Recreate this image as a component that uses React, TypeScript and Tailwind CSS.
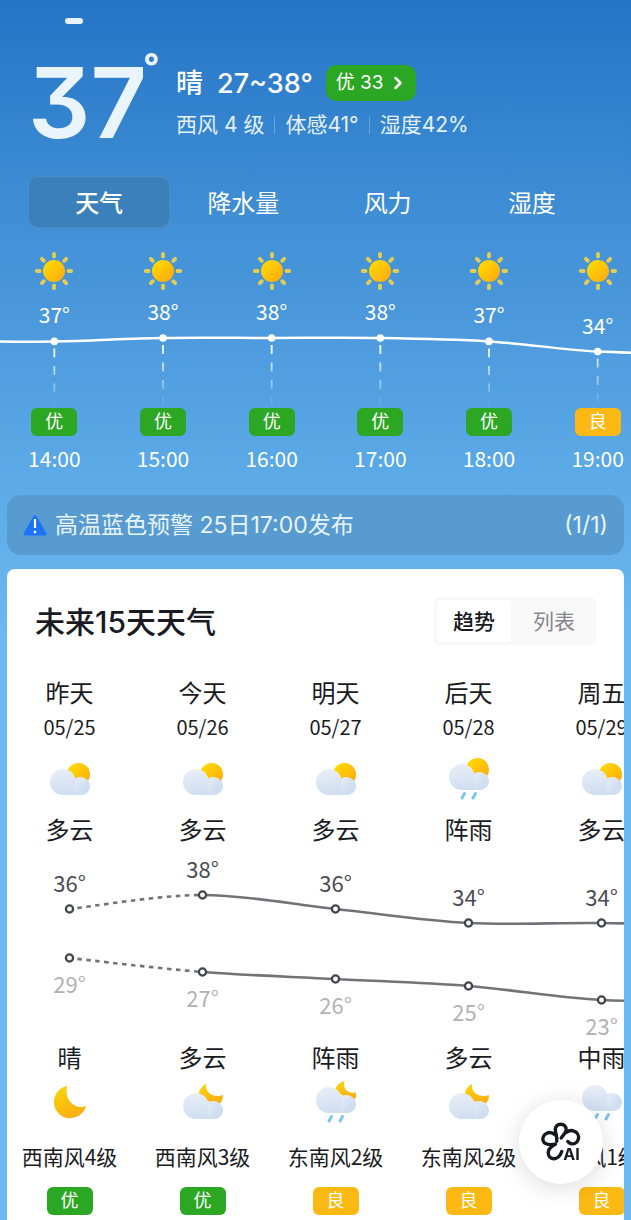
import { useState } from "react";
import { ChevronRight } from "lucide-react";
import clsx from "clsx";

type Air = "优" | "良";
type IconName = "sun" | "moon" | "cloudSun" | "cloudMoon" | "showerSun" | "showerMoon" | "rain";
type Point = { x: number; y: number };

const TABS = ["天气", "降水量", "风力", "湿度"];

const HOURS: { time: string; temp: number; air: Air }[] = [
  { time: "14:00", temp: 37, air: "优" },
  { time: "15:00", temp: 38, air: "优" },
  { time: "16:00", temp: 38, air: "优" },
  { time: "17:00", temp: 38, air: "优" },
  { time: "18:00", temp: 37, air: "优" },
  { time: "19:00", temp: 34, air: "良" },
];

const DAYS: {
  name: string;
  date: string;
  dayIcon: IconName;
  day: string;
  high: number;
  low: number;
  night: string;
  nightIcon: IconName;
  wind: string;
  air: Air;
}[] = [
  { name: "昨天", date: "05/25", dayIcon: "cloudSun", day: "多云", high: 36, low: 29, night: "晴", nightIcon: "moon", wind: "西南风4级", air: "优" },
  { name: "今天", date: "05/26", dayIcon: "cloudSun", day: "多云", high: 38, low: 27, night: "多云", nightIcon: "cloudMoon", wind: "西南风3级", air: "优" },
  { name: "明天", date: "05/27", dayIcon: "cloudSun", day: "多云", high: 36, low: 26, night: "阵雨", nightIcon: "showerMoon", wind: "东南风2级", air: "良" },
  { name: "后天", date: "05/28", dayIcon: "showerSun", day: "阵雨", high: 34, low: 25, night: "多云", nightIcon: "cloudMoon", wind: "东南风2级", air: "良" },
  { name: "周五", date: "05/29", dayIcon: "cloudSun", day: "多云", high: 34, low: 23, night: "中雨", nightIcon: "rain", wind: "南风1级", air: "良" },
];

// Catmull-Rom through every point, from index `from` to index `to`
function smooth(pts: Point[], from = 0, to = pts.length - 1) {
  let d = `M${pts[from].x} ${pts[from].y}`;
  for (let i = from; i < to; i++) {
    const p0 = pts[i - 1] ?? pts[i];
    const p1 = pts[i];
    const p2 = pts[i + 1];
    const p3 = pts[i + 2] ?? p2;
    d += ` C${p1.x + (p2.x - p0.x) / 6} ${p1.y + (p2.y - p0.y) / 6} ${p2.x - (p3.x - p1.x) / 6} ${p2.y - (p3.y - p1.y) / 6} ${p2.x} ${p2.y}`;
  }
  return d;
}

function IconDefs() {
  return (
    <svg className="absolute size-0" aria-hidden="true">
      <defs>
        <linearGradient id="sunFill" x1="0" y1="0" x2="1" y2="1">
          <stop offset="0" stopColor="#ffe100" />
          <stop offset="1" stopColor="#ffa410" />
        </linearGradient>
        <linearGradient id="moonFill" x1="0" y1="0" x2="0.4" y2="1">
          <stop offset="0" stopColor="#f7d80c" />
          <stop offset="1" stopColor="#fbb014" />
        </linearGradient>
        <linearGradient id="cloudFill" x1="0.2" y1="0" x2="0.4" y2="1">
          <stop offset="0" stopColor="#e9eef7" />
          <stop offset="1" stopColor="#cfdef1" />
        </linearGradient>
        <linearGradient id="puffFill" x1="0" y1="0" x2="1" y2="1">
          <stop offset="0" stopColor="#e9eff8" />
          <stop offset="0.6" stopColor="#cfdef1" />
        </linearGradient>
        <linearGradient id="dashFade" gradientUnits="userSpaceOnUse" x1="0" y1="45" x2="0" y2="108">
          <stop offset="0" stopColor="#fff" />
          <stop offset="1" stopColor="#fff" stopOpacity="0" />
        </linearGradient>
      </defs>
    </svg>
  );
}

function Cloud() {
  return (
    <>
      <path d="M13 6a13 13 0 0 1 12.4 9.3A9 9 0 1 1 30.5 32H13A13 13 0 0 1 13 6Z" fill="url(#cloudFill)" />
      <path d="M24.500 23c.500-5 3-8.500 6.500-8.500a9 8.700 0 0 1 0 17.500h-6Z" fill="url(#puffFill)" />
    </>
  );
}

function Drops() {
  return (
    <path d="M15.500 35.500 13 40M26.500 35.500 24 40" stroke="#7cc6ec" strokeWidth="3" strokeLinecap="round" fill="none" />
  );
}

function WeatherIcon({ name }: { name: IconName }) {
  if (name === "sun") {
    return (
      <svg viewBox="0 0 40 40" className="size-10" aria-hidden="true">
        {[0, 45, 90, 135, 180, 225, 270, 315].map((a) => (
          <path key={a} d="M20 2.800v2.800" transform={`rotate(${a} 20 20)`} stroke="#e3cd55" strokeWidth="3.800" strokeLinecap="round" />
        ))}
        <circle cx="20" cy="20" r="11" fill="url(#sunFill)" />
      </svg>
    );
  }
  return (
    <svg viewBox="0 0 40 44" className="h-11 w-10" aria-hidden="true">
      {name === "moon" && (
        <path d="M17 6A16.300 16.300 0 1 0 36 26C27 30 14 22 17 6Z" fill="url(#moonFill)" />
      )}
      {name === "cloudSun" && (
        <g transform="translate(0 6)">
          <circle cx="28.500" cy="11.500" r="11.500" fill="url(#sunFill)" />
          <Cloud />
        </g>
      )}
      {name === "showerSun" && (
        <g transform="translate(0 1)">
          <circle cx="28.500" cy="11.500" r="11.500" fill="url(#sunFill)" />
          <Cloud />
          <Drops />
        </g>
      )}
      {name === "cloudMoon" && (
        <g transform="translate(0 7)">
          <path d="M23-3c-4 2-7 6-7.500 11L30 17l7.500-1c1.500-2 2.500-5 2.500-8-8 3-18-1-17-11Z" fill="url(#moonFill)" />
          <Cloud />
        </g>
      )}
      {name === "showerMoon" && (
        <g transform="translate(0 1)">
          <path d="M28.500 0C24 1 20 5 19 9l11 8 9 1c1.500-2 2.500-4 2-7-7 3-15-2-12.500-11Z" fill="url(#moonFill)" />
          <Cloud />
          <Drops />
        </g>
      )}
      {name === "rain" && (
        <g transform="translate(0 -1)">
          <Cloud />
          <Drops />
        </g>
      )}
    </svg>
  );
}

function AirBadge({ air }: { air: Air }) {
  return (
    <span
      className={clsx(
        "flex h-7 w-[46px] items-center justify-center rounded-md pb-1 text-lg leading-none text-white",
        air === "优" ? "bg-[#2ca724]" : "bg-[#fdb913]",
      )}
    >
      {air}
    </span>
  );
}

function HourlyChart() {
  const step = 652 / HOURS.length;
  const y = (t: number) => 38 + (38 - t) * 3.4;
  const pts = HOURS.map((h, i) => ({ x: step * (i + 0.5), y: y(h.temp) }));
  // the line runs on past both ends of the visible hours
  const line = [{ x: -step / 2, y: y(37) }, ...pts, { x: step * 6.5, y: y(33.5) }];

  return (
    <svg viewBox="0 0 652 108" className="h-[108px] w-[652px]" role="img" aria-label="逐小时气温">
      <path d={smooth(line)} fill="none" stroke="#fff" strokeWidth="2.500" />
      {pts.map((p, i) => (
        <g key={HOURS[i].time}>
          <path d={`M${p.x} ${p.y + 7}L${p.x + 0.01} 108`} stroke="url(#dashFade)" strokeWidth="1.800" strokeDasharray="9 8.500" />
          <circle cx={p.x} cy={p.y} r="3.800" fill="#fff" />
          <text x={p.x} y={p.y - 18} textAnchor="middle" className="fill-white text-[21px]">
            {HOURS[i].temp}°
          </text>
        </g>
      ))}
    </svg>
  );
}

function DailyChart() {
  const y = (t: number) => 50 + (38 - t) * 7;
  const x = (i: number) => 133 * (i + 0.5);
  const highs = [...DAYS.map((d) => d.high), 33.5].map((t, i) => ({ x: x(i), y: y(t) }));
  const lows = [...DAYS.map((d) => d.low), 23].map((t, i) => ({ x: x(i), y: y(t) }));

  return (
    <svg viewBox="0 0 665 196" className="h-[196px] w-[665px]" role="img" aria-label="每日最高和最低气温">
      {[highs, lows].map((pts, row) => (
        <g key={row} fill="none" stroke="#727278" strokeWidth="2.600">
          <path d={smooth(pts, 0, 1)} strokeDasharray="4.500 4.500" strokeDashoffset="-8" />
          <path d={smooth(pts, 1)} />
        </g>
      ))}
      {DAYS.map((d, i) => (
        <g key={d.date}>
          <circle cx={x(i)} cy={y(d.high)} r="3.600" fill="#fff" stroke="#44454c" strokeWidth="2.300" />
          <circle cx={x(i)} cy={y(d.low)} r="3.600" fill="#fff" stroke="#44454c" strokeWidth="2.300" />
          <text x={x(i)} y={y(d.high) - 17} textAnchor="middle" className="fill-[#4b4c52] text-[22px]">
            {d.high}°
          </text>
          <text x={x(i)} y={y(d.low) + 35} textAnchor="middle" className="fill-[#b2b2b5] text-[22px]">
            {d.low}°
          </text>
        </g>
      ))}
    </svg>
  );
}

function AssistantLogo() {
  return (
    <svg viewBox="0 0 42 42" className="size-[42px]" fill="none" stroke="#16171f" strokeWidth="3.400" strokeLinecap="round" aria-hidden="true">
      <path d="M16.700 20.300C17.500 15 15.300 12.500 15.300 8.800C15.300 5.500 17.500 3.200 20.700 3.200S26.200 5.500 26.200 8.800C26.200 12 23 14 21.200 17" />
      <path d="M26.300 11.500C28.500 9.800 31.500 9 34 10.200C37.500 11.500 39.300 15 38.300 18.300C37.200 21.800 34 23.500 31 22.600C29.500 22.200 28.500 21.500 27.800 20.500" />
      <path d="M15.300 13.800C12.500 11.600 9.500 10.900 6.800 12.200C3.500 13.800 2.200 17 3.200 20C4.400 23.500 8 24.300 15.500 23.300" />
      <path d="M14.500 23.500C10.500 26 8 28.500 8.200 32C8.400 35.500 11 37.700 14 37.700C18.500 37.600 20.300 34.500 21.800 30.500" />
      <text x="31.500" y="38.500" textAnchor="middle" stroke="none" className="fill-[#16171f] font-['Inter',sans-serif] text-[16px] font-bold">
        AI
      </text>
    </svg>
  );
}

export default function App() {
  const [tab, setTab] = useState("天气");
  const [view, setView] = useState("趋势");

  return (
    <div className="relative flex min-h-screen flex-col overflow-hidden bg-[#6cb8f1] bg-[linear-gradient(180deg,#2575c7_0px,#4391d6_240px,#5caae7_480px,#6cb8f1_640px)] font-['Noto_Sans_CJK_SC',sans-serif] text-white">
      <IconDefs />

      <header className="px-7 pt-[18px]">
        <div className="ml-[37px] h-[6px] w-[18px] rounded-full bg-white/90" />
        <div className="mt-[22px] flex h-[110px] items-center font-['Inter','Noto_Sans_CJK_SC',sans-serif]">
          <div className="flex w-[148px] shrink-0 text-[#eaf4fc]">
            <span className="pt-1 text-[98px] leading-[110px] font-semibold [font-feature-settings:'cv09']">37</span>
            <span className="-ml-1 text-[36px] leading-[44px] font-bold">°</span>
          </div>
          <div className="pt-1">
            <div className="flex h-9 items-center text-[27px] font-medium">
              <span className="pt-[2px]">晴</span>
              <span className="ml-[14px] pt-[2px]">27~38°</span>
              <a href="#air" className="ml-[13px] flex h-9 items-center rounded-[10px] bg-[#2ca724] pr-2 pl-[10px] text-[19px] font-normal">
                优 33
                <ChevronRight className="ml-1 size-5" strokeWidth={3} />
              </a>
            </div>
            <div className="mt-2 flex h-8 items-center text-[21px] text-[#e4f1fc]">
              <span>西风 4 级</span>
              <span className="mx-[10px] h-[18px] w-px bg-white/25" />
              <span>体感41°</span>
              <span className="mx-[10px] h-[18px] w-px bg-white/25" />
              <span>湿度42%</span>
            </div>
          </div>
        </div>

        <div className="mt-5 grid grid-cols-4 gap-[2px]" role="tablist">
          {TABS.map((t) => (
            <button
              key={t}
              type="button"
              role="tab"
              aria-selected={tab === t}
              onClick={() => setTab(t)}
              className={clsx(
                "h-[52px] rounded-[10px] text-2xl",
                tab === t ? "border border-white/10 bg-[#3b7fbb] font-medium" : "border border-transparent",
              )}
            >
              {t}
            </button>
          ))}
        </div>
      </header>

      <section className="mt-[23px] overflow-x-auto [scrollbar-width:none]">
        <div className="w-[652px]">
          <ul className="grid grid-cols-6 justify-items-center">
            {HOURS.map((h) => (
              <li key={h.time}>
                <WeatherIcon name="sun" />
              </li>
            ))}
          </ul>
          <div className="mt-[9px]">
            <HourlyChart />
          </div>
          <ul className="grid grid-cols-6 justify-items-center">
            {HOURS.map((h) => (
              <li key={h.time} className="flex flex-col items-center">
                <AirBadge air={h.air} />
                <time className="mt-2 text-[21px] leading-7">{h.time}</time>
              </li>
            ))}
          </ul>
        </div>
      </section>

      <a
        href="#alert"
        className="mx-[7px] mt-[23px] flex h-[60px] items-center rounded-[14px] bg-[#589bd0] px-4 font-['Inter','Noto_Sans_CJK_SC',sans-serif] text-[23px] text-[#e8f4fd]"
      >
        <svg viewBox="0 0 24 24" className="size-6" aria-hidden="true">
          <path d="M12 3.500 22 21H2Z" fill="#1b74f5" stroke="#1b74f5" strokeWidth="3" strokeLinejoin="round" />
          <path d="M12 6v9M12 17.800v2.400" stroke="#fff" strokeWidth="2.200" />
        </svg>
        <span className="ml-2">高温蓝色预警 25日17:00发布</span>
        <span className="ml-auto">(1/1)</span>
      </a>

      <main className="mx-[7px] mt-[14px] flex-1 overflow-hidden rounded-t-lg bg-white pt-7 pb-1 text-[#1a1b22]">
        <div className="flex h-12 items-center justify-between px-7">
          <h1 className="pt-[2px] font-['Inter','Noto_Sans_CJK_SC',sans-serif] text-[30px] font-medium">未来15天天气</h1>
          <div className="flex h-12 gap-1 rounded-md bg-[#f8f8f8] p-[3px]">
            {["趋势", "列表"].map((v) => (
              <button
                key={v}
                type="button"
                aria-pressed={view === v}
                onClick={() => setView(v)}
                className={clsx(
                  "rounded text-[21px]",
                  view === v ? "bg-white px-4 font-medium" : "px-[18px] text-[#86868b]",
                )}
              >
                {v}
              </button>
            ))}
          </div>
        </div>

        <div className="mt-[31px] -ml-1 overflow-x-auto [scrollbar-width:none]">
          <div className="w-[665px]">
            <ul className="grid grid-cols-5">
              {DAYS.map((d) => (
                <li key={d.date} className="flex flex-col items-center">
                  <span className="text-2xl leading-8">{d.name}</span>
                  <time className="mt-[3px] text-[20px] leading-8">{d.date}</time>
                  <span className="mt-[14px] h-11">
                    <WeatherIcon name={d.dayIcon} />
                  </span>
                  <span className="mt-3 text-2xl leading-8">{d.day}</span>
                </li>
              ))}
            </ul>
            <DailyChart />
            <ul className="grid grid-cols-5">
              {DAYS.map((d) => (
                <li key={d.date} className="flex flex-col items-center">
                  <span className="text-2xl leading-8">{d.night}</span>
                  <span className="mt-[7px] h-11">
                    <WeatherIcon name={d.nightIcon} />
                  </span>
                  <span className="mt-4 mb-[15px] text-[21px] leading-8">{d.wind}</span>
                  <AirBadge air={d.air} />
                </li>
              ))}
            </ul>
          </div>
        </div>
      </main>

      <button
        type="button"
        aria-label="AI"
        className="fixed right-7 bottom-9 flex size-[84px] items-center justify-center rounded-full bg-white shadow-[0_4px_24px_rgba(0,0,0,0.14)]"
      >
        <AssistantLogo />
      </button>
    </div>
  );
}
